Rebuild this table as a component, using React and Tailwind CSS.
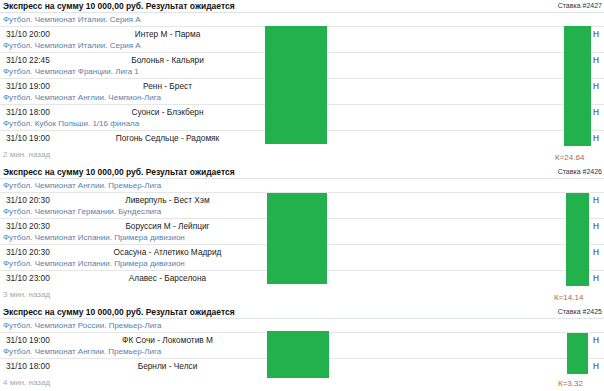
import React from "react";

const blocks = [
  {
    stake: "Ставка #2427",
    ago: "2 мин. назад",
    k: "К=24.64",
    big: "left-[265px] w-[62px] top-0 h-[118px]",
    small: "left-[564px] w-[27px] top-0 h-[120px]",
    footer: "h-[22px]",
    kPos: "ml-[555px] mt-[9px]",
    matches: [
      { cat: "Футбол. Чемпионат Италии. Серия А", date: "31/10 20:00", teams: "Интер М - Парма" },
      { cat: "Футбол. Чемпионат Италии. Серия А", date: "31/10 22:45", teams: "Болонья - Кальяри" },
      { cat: "Футбол. Чемпионат Франции. Лига 1", date: "31/10 19:00", teams: "Ренн - Брест" },
      { cat: "Футбол. Чемпионат Англии. Чемпион-Лига", date: "31/10 18:00", teams: "Суонси - Блэкберн" },
      { cat: "Футбол. Кубок Польши. 1/16 финала", date: "31/10 19:00", teams: "Погонь Седльце - Радомяк" },
    ],
  },
  {
    stake: "Ставка #2426",
    ago: "3 мин. назад",
    k: "К=14.14",
    big: "left-[267px] w-[60px] top-[1px] h-[91px]",
    small: "left-[566px] w-[23px] top-[1px] h-[93px]",
    footer: "h-[22px]",
    kPos: "ml-[554px] mt-[9px]",
    matches: [
      { cat: "Футбол. Чемпионат Англии. Премьер-Лига", date: "31/10 20:30", teams: "Ливерпуль - Вест Хэм" },
      { cat: "Футбол. Чемпионат Германии. Бундеслига", date: "31/10 20:30", teams: "Боруссия М - Лейпциг" },
      { cat: "Футбол. Чемпионат Испании. Примера дивизион", date: "31/10 20:30", teams: "Осасуна - Атлетико Мадрид" },
      { cat: "Футбол. Чемпионат Испании. Примера дивизион", date: "31/10 23:00", teams: "Алавес - Барселона" },
    ],
  },
  {
    stake: "Ставка #2425",
    ago: "4 мин. назад",
    k: "К=3.32",
    big: "left-[267px] w-[62px] top-[-1px] h-[47px]",
    small: "left-[567px] w-[21px] top-[1px] h-[41px]",
    footer: "h-[20px]",
    kPos: "ml-[558px] mt-[9px]",
    matches: [
      { cat: "Футбол. Чемпионат России. Премьер-Лига", date: "31/10 19:00", teams: "ФК Сочи - Локомотив М" },
      { cat: "Футбол. Чемпионат Англии. Премьер-Лига", date: "31/10 18:00", teams: "Бернли - Челси" },
    ],
  },
];

function Block({ b }) {
  return (
    <div>
      <div className="flex h-[13px] items-center justify-between border-b border-[#dde3ea] pl-[3px] pr-[2px]">
        <span className="text-[8.5px] font-bold leading-[12px] text-[#111]">
          Экспресс на сумму 10 000,00 руб. Результат ожидается
        </span>
        <span className="text-[7px] leading-[12px] text-[#333]">{b.stake}</span>
      </div>
      <div className="flex h-[13px] items-center pl-[3px] text-[8px] leading-[12px] text-[#5a80a8]">
        {b.matches[0].cat}
      </div>
      <div className="relative">
        {b.matches.map((m, i) => (
          <div key={i}>
            {i > 0 && (
              <div className="flex h-[12px] items-center pl-[3px] text-[8px] leading-[12px] text-[#5a80a8]">
                {m.cat}
              </div>
            )}
            <div className="flex h-[14px] items-center border-t border-[#e6e6e6] text-[8.3px] leading-[12px] text-[#222]">
              <div className="w-[70px] pl-[6px]">{m.date}</div>
              <div className="w-[195px] text-center">{m.teams}</div>
              <div className="flex-1" />
              <div className="w-[11px] text-[#333]">Н</div>
            </div>
          </div>
        ))}
        <div className={"absolute bg-[#22b14c] " + b.big} />
        <div className={"absolute bg-[#22b14c] " + b.small} />
      </div>
      <div className={"flex items-start " + b.footer}>
        <div className="mt-[5px] pl-[3px] text-[8px] leading-[11px] text-[#a8a8a8]">{b.ago}</div>
      </div>
    </div>
  );
}

export default function App() {
  return (
    <div className="h-[391px] w-[604px] overflow-hidden bg-white font-['Liberation_Sans',Arial,sans-serif]">
      {blocks.map((b, i) => (
        <div key={i} className="relative">
          <Block b={b} />
          <div className="pointer-events-none absolute bottom-0 left-0 right-0">
            <div className={"mb-[3px] text-[8px] leading-[10px] text-[#b0675a] " + b.kPos}>{b.k}</div>
          </div>
        </div>
      ))}
    </div>
  );
}
